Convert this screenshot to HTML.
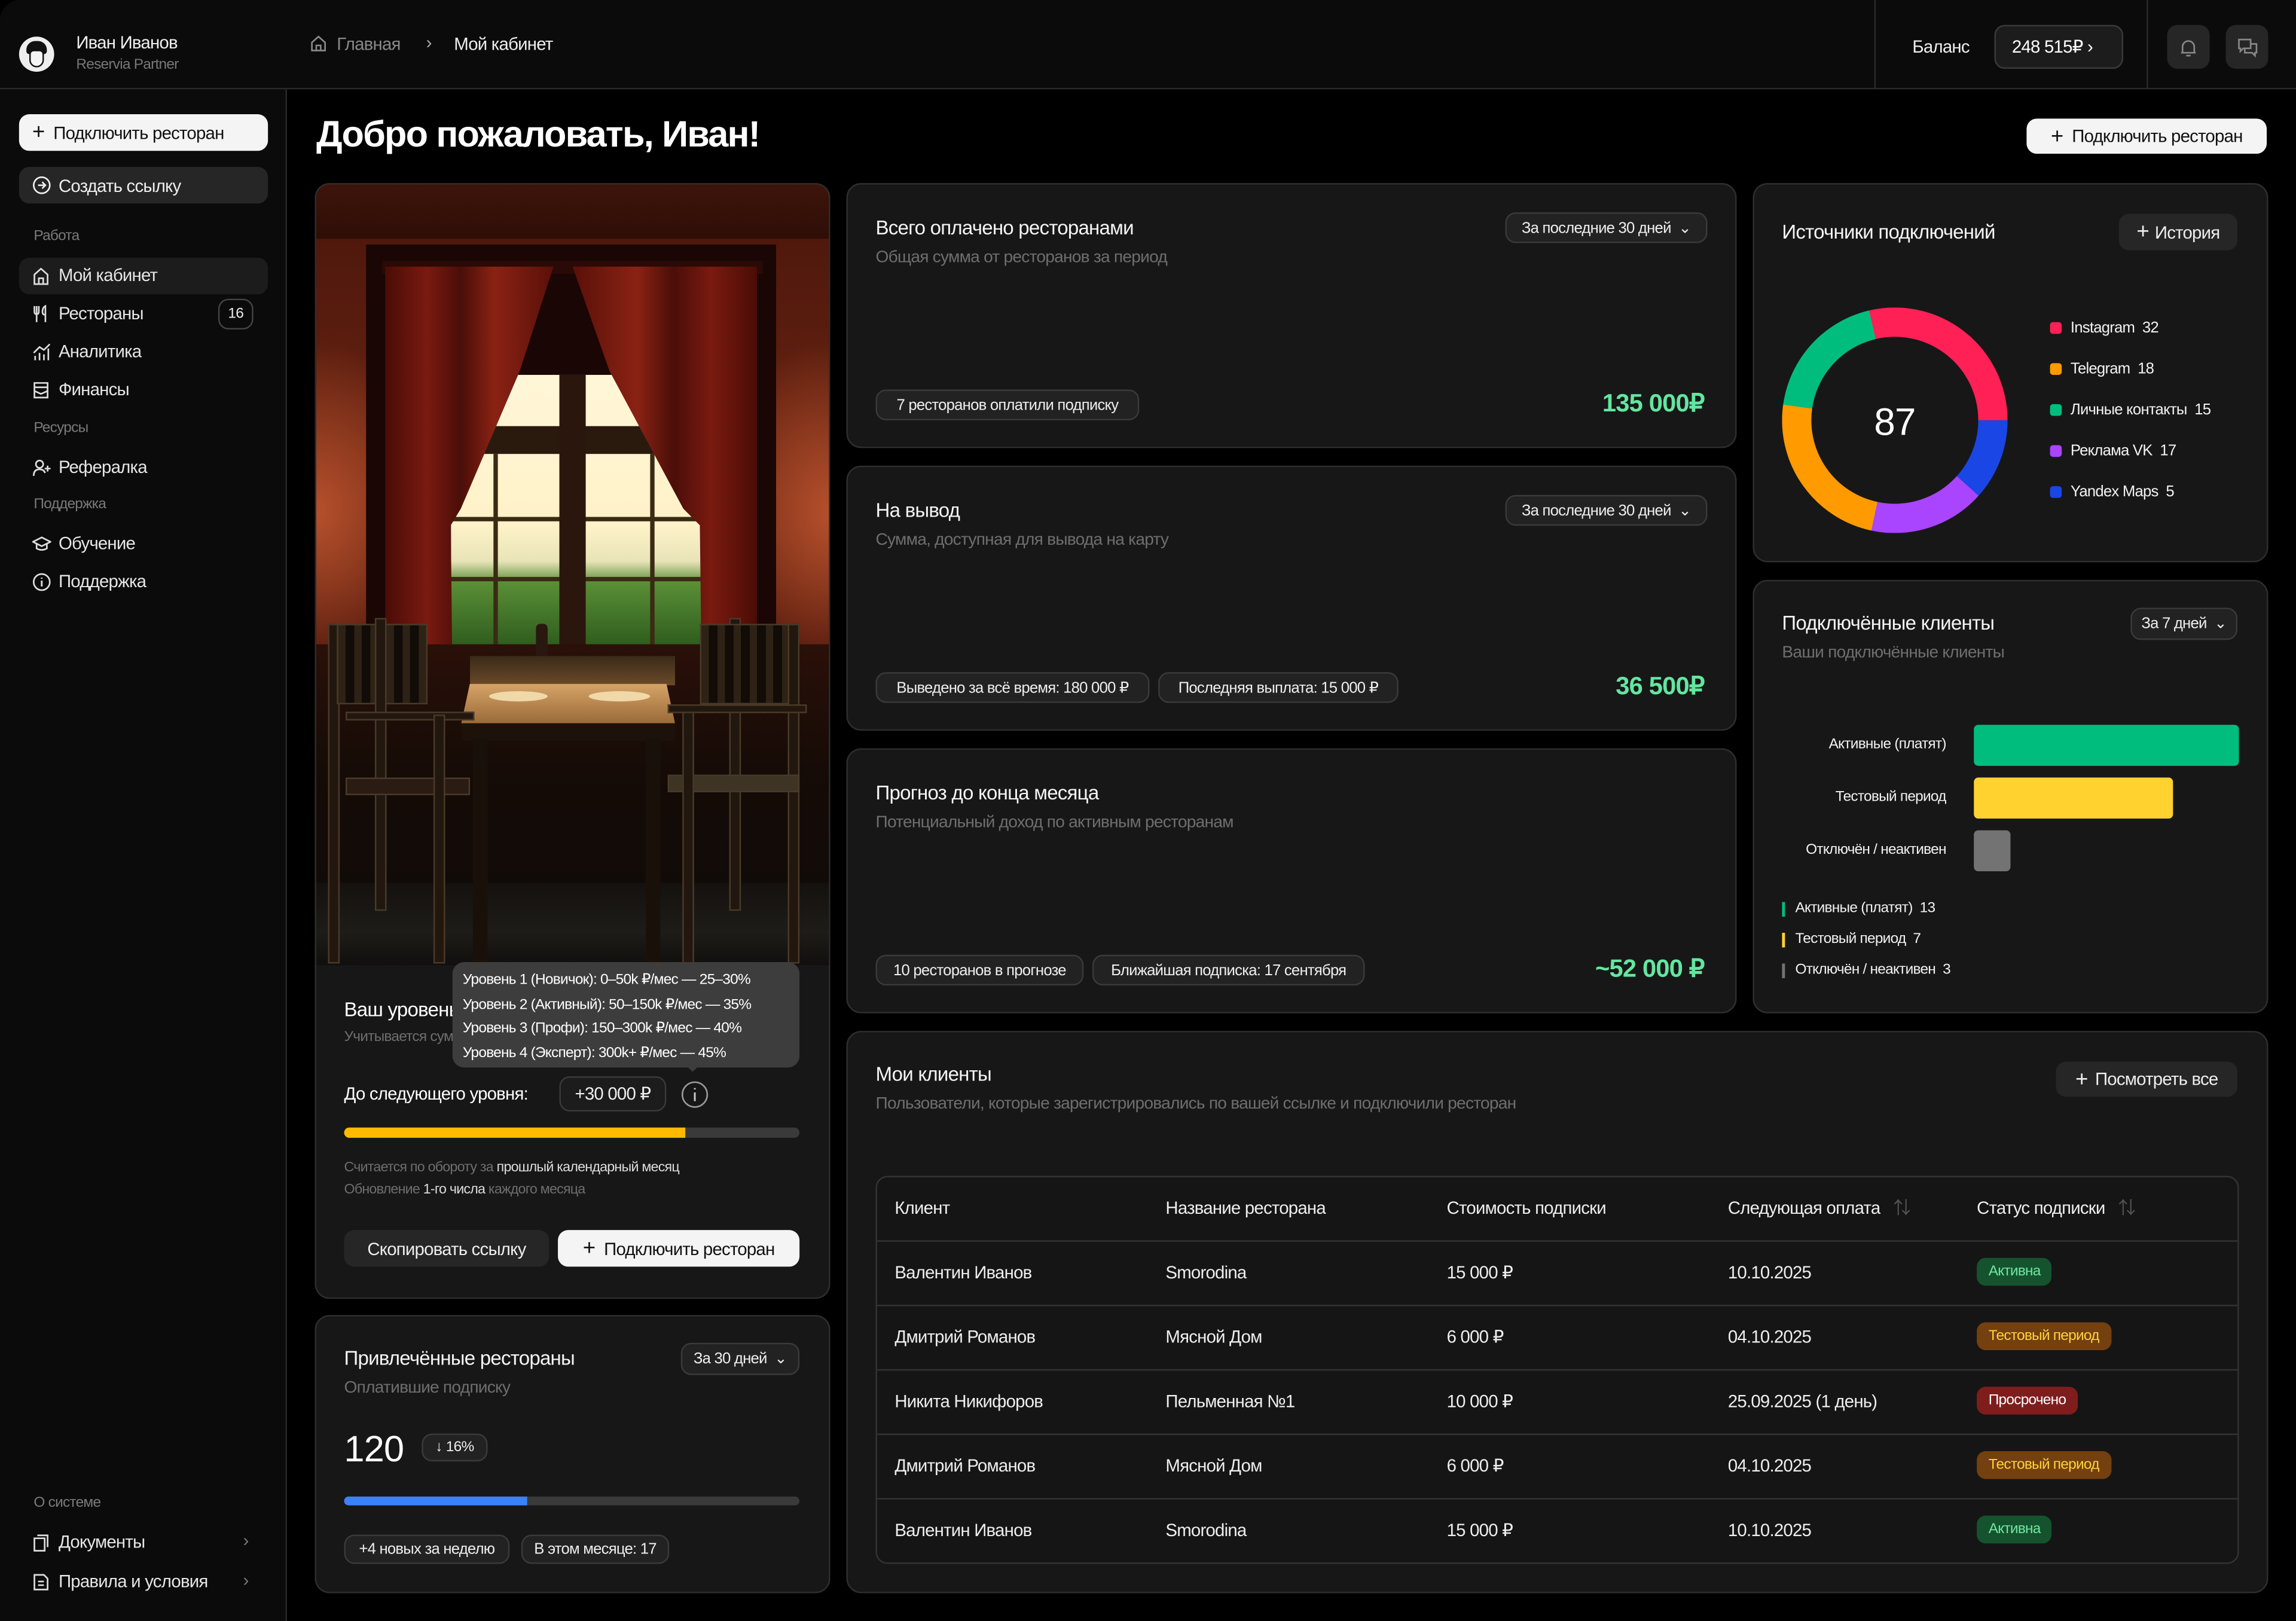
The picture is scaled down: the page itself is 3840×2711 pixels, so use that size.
<!DOCTYPE html>
<html><head><meta charset="utf-8">
<style>
*{box-sizing:border-box;margin:0;padding:0}
html,body{width:3840px;height:2710px;background:#000;overflow:hidden}
#root{position:absolute;left:0;top:0;width:1568px;height:1107px;transform:scale(2.449);transform-origin:0 0;background:#000;font-family:"Liberation Sans","Noto Sans CJK SC",sans-serif;color:#f2f2f2;letter-spacing:-0.02em}
.a{position:absolute}
.t{position:absolute;white-space:nowrap;line-height:1}
.card{position:absolute;background:#171717;border:1px solid #2e2e2e;border-radius:10px}
.pill{position:absolute;background:#222;border:1px solid #3a3a3a;border-radius:7px;font-size:10.5px;color:#eee;display:flex;align-items:center;justify-content:center;white-space:nowrap}
.btnw{position:absolute;background:#f4f4f4;color:#111;border-radius:7px;font-size:12px;display:flex;align-items:center;justify-content:center;white-space:nowrap}
.btnd{position:absolute;background:#262626;color:#eee;border-radius:7px;font-size:12px;display:flex;align-items:center;white-space:nowrap}
.h{font-size:13.5px;color:#f5f5f5}
.s{font-size:11.5px;color:#6e6e6e}
.nav{font-size:12px;color:#e6e6e6}
.sec{font-size:10px;color:#7a7a7a}
.amt{font-size:17px;color:#63e6a0;font-weight:bold}
.th{font-size:12px;color:#eee}
.td{font-size:12px;color:#eee}
.badge{position:absolute;border-radius:6px;font-size:10px;height:19px;display:flex;align-items:center;padding:0 8px;white-space:nowrap}
.bg{background:#15532f;color:#6ee7a0}
.by{background:#74400f;color:#ffd23a}
.br{background:#7f1d1d;color:#fff}
.ch{position:absolute;background:#22170f;border:1px solid #4a3a28}
</style></head><body>
<div id="root">
<!-- header -->
<div class="a" style="left:0;top:0;width:1568px;height:61px;background:#0b0b0b;border-bottom:1px solid #2a2a2a;border-radius:14px 0 0 0"></div>
<div class="a" style="left:13px;top:25px;width:24px;height:24px;border-radius:50%;background:#eee;overflow:hidden">
 <div class="a" style="left:5px;top:3px;width:14px;height:9px;background:#111;border-radius:6px 6px 2px 2px"></div>
 <div class="a" style="left:7px;top:9px;width:10px;height:12px;background:#f4f4f4;border:1px solid #111;border-radius:3px 3px 5px 5px"></div>
</div>
<div class="t" style="left:52px;top:23px;font-size:12px;color:#f0f0f0">Иван Иванов</div>
<div class="t" style="left:52px;top:40px;font-size:10px;color:#777">Reservia Partner</div>
<svg class="a" style="left:211px;top:23px" width="13" height="13" viewBox="0 0 13 13"><path d="M2 6 L6.5 2 L11 6 V11.5 H2 Z M5 11.5 V8 H8 V11.5" fill="none" stroke="#888" stroke-width="1.1"/></svg>
<div class="t" style="left:230px;top:24px;font-size:12px;color:#888">Главная</div>
<div class="t" style="left:291px;top:23px;font-size:12px;color:#aaa">›</div>
<div class="t" style="left:310px;top:24px;font-size:12px;color:#eee">Мой кабинет</div>
<div class="a" style="left:1280px;top:0;width:1px;height:61px;background:#2a2a2a"></div>
<div class="t" style="left:1306px;top:26px;font-size:12px;color:#eee">Баланс</div>
<div class="a" style="left:1362px;top:17px;width:88px;height:30px;border:1px solid #3a3a3a;background:#1c1c1c;border-radius:7px"></div>
<div class="t" style="left:1374px;top:26px;font-size:12px;color:#fff">248 515₽ ›</div>
<div class="a" style="left:1466px;top:0;width:1px;height:61px;background:#2a2a2a"></div>
<div class="a" style="left:1480px;top:17px;width:29px;height:30px;background:#262626;border-radius:7px"></div>
<svg class="a" style="left:1487px;top:25px" width="15" height="15" viewBox="0 0 15 15"><path d="M3.5 11 V7 a4 4 0 0 1 8 0 V11 H2.5 H12.5 M6 13 h3" fill="none" stroke="#888" stroke-width="1.1"/></svg>
<div class="a" style="left:1520px;top:17px;width:29px;height:30px;background:#262626;border-radius:7px"></div>
<svg class="a" style="left:1527px;top:24px" width="16" height="16" viewBox="0 0 16 16"><path d="M2 3 H10 V9 H5 L3 11 V9 H2 Z M10 6 H14 V12 H13 V14 L11 12 H6 V9" fill="none" stroke="#888" stroke-width="1.1"/></svg>

<!-- sidebar -->
<div class="a" style="left:0;top:61px;width:196px;height:1046px;background:#0b0b0b;border-right:1px solid #2a2a2a"></div>
<div class="btnw" style="left:13px;top:78px;width:170px;height:25px;justify-content:flex-start;padding-left:9px"><span style="font-size:15px;margin-right:6px">+</span>Подключить ресторан</div>
<div class="btnd" style="left:13px;top:114px;width:170px;height:25px;padding-left:9px"><svg width="13" height="13" viewBox="0 0 13 13" style="margin-right:5px"><circle cx="6.5" cy="6.5" r="5.5" fill="none" stroke="#eee" stroke-width="1.1"/><path d="M4 6.5 H9 M6.8 4.3 L9 6.5 L6.8 8.7" fill="none" stroke="#eee" stroke-width="1.1"/></svg>Создать ссылку</div>
<div class="t sec" style="left:23px;top:157px">Работа</div>
<div class="a" style="left:13px;top:176px;width:170px;height:25px;background:#1c1c1c;border-radius:7px"></div>
<svg class="a" style="left:22px;top:182px" width="12" height="13" viewBox="0 0 12 13"><path d="M1.5 5.5 L6 1.5 L10.5 5.5 V12 H1.5 Z M4.5 12 V8 H7.5 V12" fill="none" stroke="#ddd" stroke-width="1.1"/></svg>
<div class="t nav" style="left:40px;top:182px">Мой кабинет</div>
<svg class="a" style="left:22px;top:208px" width="12" height="13" viewBox="0 0 12 13"><path d="M1.5 1 V5 Q1.5 6.5 3 6.5 Q4.5 6.5 4.5 5 V1 M3 1 V12 M9 12 V1 Q7 2 7 5 Q7 7 9 7" fill="none" stroke="#ddd" stroke-width="1.1"/></svg>
<div class="t nav" style="left:40px;top:208px">Рестораны</div>
<div class="a" style="left:149px;top:204px;width:24px;height:21px;border:1px solid #444;border-radius:7px;font-size:10px;display:flex;align-items:center;justify-content:center;color:#eee">16</div>
<svg class="a" style="left:22px;top:234px" width="13" height="13" viewBox="0 0 13 13"><path d="M2 12 V9 M5 12 V7 M8 12 V8 M11 12 V4 M1 7 L5 3 L8 5 L12 1" fill="none" stroke="#ddd" stroke-width="1.1"/></svg>
<div class="t nav" style="left:40px;top:234px">Аналитика</div>
<svg class="a" style="left:22px;top:260px" width="12" height="13" viewBox="0 0 12 13"><path d="M1.5 1.5 H10.5 V11.5 H1.5 Z M1.5 4.5 H10.5 M1.5 7 L6 9 L10.5 7" fill="none" stroke="#ddd" stroke-width="1.1"/></svg>
<div class="t nav" style="left:40px;top:260px">Финансы</div>
<div class="t sec" style="left:23px;top:288px">Ресурсы</div>
<svg class="a" style="left:22px;top:313px" width="13" height="13" viewBox="0 0 13 13"><circle cx="5" cy="4" r="2.5" fill="none" stroke="#ddd" stroke-width="1.1"/><path d="M1 12 Q1 7.5 5 7.5 Q8 7.5 8.8 10 M10.5 5 V9 M8.5 7 H12.5" fill="none" stroke="#ddd" stroke-width="1.1"/></svg>
<div class="t nav" style="left:40px;top:313px">Рефералка</div>
<div class="t sec" style="left:23px;top:340px">Поддержка</div>
<svg class="a" style="left:22px;top:365px" width="13" height="13" viewBox="0 0 13 13"><path d="M0.5 5 L6.5 2 L12.5 5 L6.5 8 Z M3 6.5 V9.5 Q6.5 11.5 10 9.5 V6.5" fill="none" stroke="#ddd" stroke-width="1.1"/></svg>
<div class="t nav" style="left:40px;top:365px">Обучение</div>
<svg class="a" style="left:22px;top:391px" width="13" height="13" viewBox="0 0 13 13"><circle cx="6.5" cy="6.5" r="5.5" fill="none" stroke="#ddd" stroke-width="1.1"/><path d="M6.5 5.5 V9.5 M6.5 3.5 V4.2" stroke="#ddd" stroke-width="1.2"/></svg>
<div class="t nav" style="left:40px;top:391px">Поддержка</div>
<div class="t sec" style="left:23px;top:1022px">О системе</div>
<svg class="a" style="left:22px;top:1047px" width="12" height="13" viewBox="0 0 12 13"><path d="M3.5 1.5 H10.5 V9.5 M1.5 3.5 H8.5 V12 H1.5 Z" fill="none" stroke="#ddd" stroke-width="1.1"/></svg>
<div class="t nav" style="left:40px;top:1047px">Документы</div>
<div class="t" style="left:166px;top:1046px;font-size:12px;color:#777">›</div>
<svg class="a" style="left:22px;top:1074px" width="12" height="13" viewBox="0 0 12 13"><path d="M1.5 1.5 H8 L10.5 4 V11.5 H1.5 Z M4 6 H8 M4 8.5 H8" fill="none" stroke="#ddd" stroke-width="1.1"/></svg>
<div class="t nav" style="left:40px;top:1074px">Правила и условия</div>
<div class="t" style="left:166px;top:1073px;font-size:12px;color:#777">›</div>

<!-- title -->
<div class="t" style="left:216px;top:80px;font-size:25px;font-weight:bold;color:#fff;letter-spacing:-0.03em">Добро пожаловать, Иван!</div>
<div class="btnw" style="left:1384px;top:81px;width:164px;height:24px"><span style="font-size:15px;margin-right:6px">+</span>Подключить ресторан</div>

<!-- column 1 card -->
<div class="card" style="left:215px;top:125px;width:352px;height:762px;overflow:hidden">
 <div class="a" style="left:0;top:0;width:352px;height:533px;overflow:hidden;background:radial-gradient(ellipse 25% 22% at 0% 42%,#b5502c 0%,rgba(120,40,20,0) 100%),radial-gradient(ellipse 25% 22% at 100% 42%,#b5502c 0%,rgba(120,40,20,0) 100%),linear-gradient(#4a160b,#6a2412 40%,#4a1409 60%,#1a0a06)">
  <div class="a" style="left:0;top:0;width:352px;height:37px;background:linear-gradient(#3e140a,#2e0e07)"></div>
  <div class="a" style="left:34px;top:41px;width:280px;height:273px;background:#1a0604"></div>
  <!-- window -->
  <div class="a" style="left:92px;top:130px;width:177px;height:187px;background:linear-gradient(#fff6d8,#fff2c8 55%,#e8e4b8 68%,#5a8e36 76%,#2c5a1c)"></div>
  <div class="a" style="left:92px;top:165px;width:177px;height:19px;background:#2a1a0e"></div>
  <div class="a" style="left:92px;top:227px;width:177px;height:3px;background:#3a2a14"></div>
  <div class="a" style="left:92px;top:268px;width:177px;height:3px;background:#3a2a14"></div>
  <div class="a" style="left:121px;top:184px;width:3px;height:133px;background:#3a2a14"></div>
  <div class="a" style="left:166px;top:130px;width:18px;height:187px;background:#2a160c"></div>
  <div class="a" style="left:228px;top:184px;width:3px;height:133px;background:#3a2a14"></div>
  <div class="a" style="left:92px;top:314px;width:177px;height:8px;background:#1e0c06"></div>
  <!-- rod -->
  <div class="a" style="left:45px;top:52px;width:260px;height:9px;background:#2a0a06"></div>
  <!-- curtains -->
  <div class="a" style="left:47px;top:56px;width:115px;height:285px;background:linear-gradient(90deg,#4a0c06,#7a1a10 25%,#4a0e08 45%,#8a2214 65%,#5a1009);clip-path:polygon(0 0,100% 0,80% 25%,45% 58%,39% 62%,40% 100%,0 100%)"></div>
  <div class="a" style="left:175px;top:56px;width:126px;height:285px;background:linear-gradient(90deg,#5a1009,#8a2214 35%,#4a0e08 55%,#7a1a10 75%,#4a0c06);clip-path:polygon(0 0,100% 0,100% 100%,70% 100%,69% 62%,60% 58%,20% 25%)"></div>
  <!-- wainscot -->
  <div class="a" style="left:0;top:314px;width:352px;height:219px;background:linear-gradient(#2a1008,#150b07 40%,#0e0b09)"></div>
  <!-- floor -->
  <div class="a" style="left:0;top:477px;width:352px;height:56px;background:linear-gradient(#14110e,#1e1c18 60%,#100f0d)"></div>
  <!-- table items -->
  <div class="a" style="left:150px;top:300px;width:8px;height:28px;background:#2a1810;border-radius:3px 3px 0 0"></div>
  <!-- table -->
  <div class="a" style="left:105px;top:322px;width:140px;height:20px;background:linear-gradient(#3a2a1a,#6a4a28)"></div>
  <div class="a" style="left:99px;top:341px;width:146px;height:27px;background:linear-gradient(#d6a468,#9a6a38);clip-path:polygon(4% 0,96% 0,100% 100%,0 100%)"></div>
  <div class="a" style="left:118px;top:346px;width:40px;height:7px;border-radius:50%;background:#f0d8a8"></div>
  <div class="a" style="left:186px;top:346px;width:42px;height:7px;border-radius:50%;background:#f0d8a8"></div>
  <div class="a" style="left:99px;top:368px;width:146px;height:12px;background:#1c120a"></div>
  <div class="a" style="left:107px;top:378px;width:10px;height:155px;background:#1a100a"></div>
  <div class="a" style="left:225px;top:378px;width:10px;height:155px;background:#1a100a"></div>
  <!-- chairs left -->
  <div class="ch" style="left:8px;top:300px;width:8px;height:232px"></div>
  <div class="ch" style="left:14px;top:300px;width:62px;height:55px;background:repeating-linear-gradient(90deg,#2e2216 0 5px,#120c08 5px 11px)"></div>
  <div class="ch" style="left:40px;top:296px;width:8px;height:200px"></div>
  <div class="ch" style="left:20px;top:360px;width:88px;height:6px"></div>
  <div class="ch" style="left:20px;top:405px;width:85px;height:12px;background:#2a1c12"></div>
  <div class="ch" style="left:80px;top:362px;width:8px;height:170px"></div>
  <!-- chairs right -->
  <div class="ch" style="left:282px;top:296px;width:8px;height:200px"></div>
  <div class="ch" style="left:262px;top:300px;width:62px;height:55px;background:repeating-linear-gradient(90deg,#2e2216 0 5px,#120c08 5px 11px)"></div>
  <div class="ch" style="left:322px;top:300px;width:8px;height:232px"></div>
  <div class="ch" style="left:240px;top:355px;width:95px;height:6px"></div>
  <div class="ch" style="left:240px;top:403px;width:90px;height:12px;background:#3e3424"></div>
  <div class="ch" style="left:250px;top:360px;width:8px;height:172px"></div>
 </div>
</div>
<div class="t" style="left:235px;top:683px;font-size:13.5px;color:#fff">Ваш уровень</div>
<div class="t s" style="left:235px;top:704px;font-size:10px">Учитывается сумма</div>
<div class="a" style="left:309px;top:657px;width:237px;height:72px;background:#3d3d3d;border-radius:8px"></div>
<div class="a" style="left:468px;top:727px;width:0;height:0;border-left:5px solid transparent;border-right:5px solid transparent;border-top:5px solid #3d3d3d"></div>
<div class="t" style="left:316px;top:662px;font-size:10px;color:#fff;line-height:16.5px">Уровень 1 (Новичок): 0–50k ₽/мес — 25–30%<br>Уровень 2 (Активный): 50–150k ₽/мес — 35%<br>Уровень 3 (Профи): 150–300k ₽/мес — 40%<br>Уровень 4 (Эксперт): 300k+ ₽/мес — 45%</div>
<div class="t" style="left:235px;top:741px;font-size:12px;color:#fff">До следующего уровня:</div>
<div class="pill" style="left:382px;top:735px;width:73px;height:24px;font-size:12px;background:#1c1c1c">+30 000 ₽</div>
<svg class="a" style="left:465px;top:738px" width="19" height="19" viewBox="0 0 19 19"><circle cx="9.5" cy="9.5" r="8.5" fill="none" stroke="#999" stroke-width="1.1"/><path d="M9.5 8 V14 M9.5 5 V6" stroke="#ccc" stroke-width="1.2"/></svg>
<div class="a" style="left:235px;top:770px;width:311px;height:7px;background:#3a3a3a;border-radius:4px"></div>
<div class="a" style="left:235px;top:770px;width:233px;height:7px;background:#ffba00;border-radius:4px 0 0 4px"></div>
<div class="t" style="left:235px;top:793px;font-size:9.5px;color:#6e6e6e">Считается по обороту за <span style="color:#ddd">прошлый календарный месяц</span></div>
<div class="t" style="left:235px;top:808px;font-size:9.5px;color:#6e6e6e">Обновление <span style="color:#ddd">1-го числа</span> каждого месяца</div>
<div class="btnd" style="left:235px;top:840px;width:140px;height:25px;justify-content:center">Скопировать ссылку</div>
<div class="btnw" style="left:381px;top:840px;width:165px;height:25px"><span style="font-size:15px;margin-right:6px">+</span>Подключить ресторан</div>

<!-- card 2 col1 -->
<div class="card" style="left:215px;top:898px;width:352px;height:190px"></div>
<div class="t h" style="left:235px;top:921px">Привлечённые рестораны</div>
<div class="pill" style="left:465px;top:917px;width:81px;height:22px">За 30 дней &nbsp;⌄</div>
<div class="t s" style="left:235px;top:943px">Оплатившие подписку</div>
<div class="t" style="left:235px;top:978px;font-size:25px;color:#fff">120</div>
<div class="pill" style="left:288px;top:979px;width:45px;height:19px;font-size:10px">↓ 16%</div>
<div class="a" style="left:235px;top:1022px;width:311px;height:6px;background:#3a3a3a;border-radius:3px"></div>
<div class="a" style="left:235px;top:1022px;width:125px;height:6px;background:#3b82f6;border-radius:3px 0 0 3px"></div>
<div class="pill" style="left:235px;top:1048px;width:113px;height:20px">+4 новых за неделю</div>
<div class="pill" style="left:356px;top:1048px;width:101px;height:20px">В этом месяце: 17</div>

<!-- column 2 -->
<div class="card" style="left:578px;top:125px;width:608px;height:181px"></div>
<div class="t h" style="left:598px;top:149px">Всего оплачено ресторанами</div>
<div class="t s" style="left:598px;top:171px">Общая сумма от ресторанов за период</div>
<div class="pill" style="left:1028px;top:145px;width:138px;height:21px">За последние 30 дней &nbsp;⌄</div>
<div class="pill" style="left:598px;top:266px;width:180px;height:21px">7 ресторанов оплатили подписку</div>
<div class="t amt" style="right:404px;top:267px">135 000₽</div>

<div class="card" style="left:578px;top:318px;width:608px;height:181px"></div>
<div class="t h" style="left:598px;top:342px">На вывод</div>
<div class="t s" style="left:598px;top:364px">Сумма, доступная для вывода на карту</div>
<div class="pill" style="left:1028px;top:338px;width:138px;height:21px">За последние 30 дней &nbsp;⌄</div>
<div class="pill" style="left:598px;top:459px;width:187px;height:21px">Выведено за всё время: 180 000 ₽</div>
<div class="pill" style="left:791px;top:459px;width:164px;height:21px">Последняя выплата: 15 000 ₽</div>
<div class="t amt" style="right:404px;top:460px">36 500₽</div>

<div class="card" style="left:578px;top:511px;width:608px;height:181px"></div>
<div class="t h" style="left:598px;top:535px">Прогноз до конца месяца</div>
<div class="t s" style="left:598px;top:557px">Потенциальный доход по активным ресторанам</div>
<div class="pill" style="left:598px;top:652px;width:142px;height:21px">10 ресторанов в прогнозе</div>
<div class="pill" style="left:746px;top:652px;width:186px;height:21px">Ближайшая подписка: 17 сентября</div>
<div class="t amt" style="right:404px;top:653px">~52 000 ₽</div>

<!-- clients table -->
<div class="card" style="left:578px;top:704px;width:971px;height:384px"></div>
<div class="t h" style="left:598px;top:727px">Мои клиенты</div>
<div class="t s" style="left:598px;top:749px">Пользователи, которые зарегистрировались по вашей ссылке и подключили ресторан</div>
<div class="btnd" style="left:1404px;top:725px;width:124px;height:24px;justify-content:center"><span style="font-size:15px;margin-right:5px">+</span>Посмотреть все</div>
<div class="a" style="left:598px;top:803px;width:931px;height:265px;border:1px solid #333;border-radius:8px;background:#151515"></div>
<div class="a" style="left:599px;top:847px;width:929px;height:1px;background:#333"></div>
<div class="a" style="left:599px;top:891px;width:929px;height:1px;background:#333"></div>
<div class="a" style="left:599px;top:935px;width:929px;height:1px;background:#333"></div>
<div class="a" style="left:599px;top:979px;width:929px;height:1px;background:#333"></div>
<div class="a" style="left:599px;top:1023px;width:929px;height:1px;background:#333"></div>
<div class="t th" style="left:611px;top:819px">Клиент</div>
<div class="t th" style="left:796px;top:819px">Название ресторана</div>
<div class="t th" style="left:988px;top:819px">Стоимость подписки</div>
<div class="t th" style="left:1180px;top:819px">Следующая оплата <span style="color:#555;margin-left:6px">⇅</span></div>
<div class="t th" style="left:1350px;top:819px">Статус подписки <span style="color:#555;margin-left:6px">⇅</span></div>

<div class="t td" style="left:611px;top:863px">Валентин Иванов</div><div class="t td" style="left:796px;top:863px">Smorodina</div><div class="t td" style="left:988px;top:863px">15 000 ₽</div><div class="t td" style="left:1180px;top:863px">10.10.2025</div><div class="badge bg" style="left:1350px;top:859px">Активна</div>
<div class="t td" style="left:611px;top:907px">Дмитрий Романов</div><div class="t td" style="left:796px;top:907px">Мясной Дом</div><div class="t td" style="left:988px;top:907px">6 000 ₽</div><div class="t td" style="left:1180px;top:907px">04.10.2025</div><div class="badge by" style="left:1350px;top:903px">Тестовый период</div>
<div class="t td" style="left:611px;top:951px">Никита Никифоров</div><div class="t td" style="left:796px;top:951px">Пельменная №1</div><div class="t td" style="left:988px;top:951px">10 000 ₽</div><div class="t td" style="left:1180px;top:951px">25.09.2025 (1 день)</div><div class="badge br" style="left:1350px;top:947px">Просрочено</div>
<div class="t td" style="left:611px;top:995px">Дмитрий Романов</div><div class="t td" style="left:796px;top:995px">Мясной Дом</div><div class="t td" style="left:988px;top:995px">6 000 ₽</div><div class="t td" style="left:1180px;top:995px">04.10.2025</div><div class="badge by" style="left:1350px;top:991px">Тестовый период</div>
<div class="t td" style="left:611px;top:1039px">Валентин Иванов</div><div class="t td" style="left:796px;top:1039px">Smorodina</div><div class="t td" style="left:988px;top:1039px">15 000 ₽</div><div class="t td" style="left:1180px;top:1039px">10.10.2025</div><div class="badge bg" style="left:1350px;top:1035px">Активна</div>

<!-- column 3 -->
<div class="card" style="left:1197px;top:125px;width:352px;height:259px"></div>
<div class="t h" style="left:1217px;top:152px">Источники подключений</div>
<div class="btnd" style="left:1447px;top:146px;width:81px;height:25px;justify-content:center"><span style="font-size:15px;margin-right:4px">+</span>История</div>
<svg class="a" style="left:1217px;top:210px" width="154" height="154" viewBox="0 0 154 154">
 <g fill="none" stroke-width="20">
  <circle cx="77" cy="77" r="67" stroke="#ff2056" stroke-dasharray="121.6 421" transform="rotate(-104 77 77)"/>
  <circle cx="77" cy="77" r="67" stroke="#1a46e6" stroke-dasharray="49.1 421" transform="rotate(0 77 77)"/>
  <circle cx="77" cy="77" r="67" stroke="#a944ff" stroke-dasharray="70.2 421" transform="rotate(42 77 77)"/>
  <circle cx="77" cy="77" r="67" stroke="#ff9a00" stroke-dasharray="100.6 421" transform="rotate(102 77 77)"/>
  <circle cx="77" cy="77" r="67" stroke="#00bd7e" stroke-dasharray="80.4 421" transform="rotate(188 77 77)"/>
 </g>
 <text x="77" y="87" text-anchor="middle" font-family="Liberation Sans" font-size="26" fill="#fff">87</text>
</svg>
<div class="a" style="left:1400px;top:220px;width:8px;height:8px;border-radius:2px;background:#ff2056"></div><div class="t" style="left:1414px;top:219px;font-size:10.5px">Instagram &nbsp;32</div>
<div class="a" style="left:1400px;top:248px;width:8px;height:8px;border-radius:2px;background:#ff9a00"></div><div class="t" style="left:1414px;top:247px;font-size:10.5px">Telegram &nbsp;18</div>
<div class="a" style="left:1400px;top:276px;width:8px;height:8px;border-radius:2px;background:#00bd7e"></div><div class="t" style="left:1414px;top:275px;font-size:10.5px">Личные контакты &nbsp;15</div>
<div class="a" style="left:1400px;top:304px;width:8px;height:8px;border-radius:2px;background:#a944ff"></div><div class="t" style="left:1414px;top:303px;font-size:10.5px">Реклама VK &nbsp;17</div>
<div class="a" style="left:1400px;top:332px;width:8px;height:8px;border-radius:2px;background:#1a46e6"></div><div class="t" style="left:1414px;top:331px;font-size:10.5px">Yandex Maps &nbsp;5</div>

<div class="card" style="left:1197px;top:396px;width:352px;height:296px"></div>
<div class="t h" style="left:1217px;top:419px">Подключённые клиенты</div>
<div class="pill" style="left:1455px;top:415px;width:73px;height:22px">За 7 дней &nbsp;⌄</div>
<div class="t s" style="left:1217px;top:441px">Ваши подключённые клиенты</div>
<div class="t" style="right:239px;top:504px;font-size:10px">Активные (платят)</div>
<div class="a" style="left:1348px;top:495px;width:181px;height:28px;background:#00bd7e;border-radius:3px"></div>
<div class="t" style="right:239px;top:540px;font-size:10px">Тестовый период</div>
<div class="a" style="left:1348px;top:531px;width:136px;height:28px;background:#ffd230;border-radius:3px"></div>
<div class="t" style="right:239px;top:576px;font-size:10px">Отключён / неактивен</div>
<div class="a" style="left:1348px;top:567px;width:25px;height:28px;background:#737373;border-radius:3px"></div>
<div class="a" style="left:1217px;top:616px;width:3px;height:10px;border-left:2px dashed #00bd7e"></div><div class="t" style="left:1226px;top:616px;font-size:10px">Активные (платят) &nbsp;13</div>
<div class="a" style="left:1217px;top:637px;width:3px;height:10px;border-left:2px dashed #ffd230"></div><div class="t" style="left:1226px;top:637px;font-size:10px">Тестовый период &nbsp;7</div>
<div class="a" style="left:1217px;top:658px;width:3px;height:10px;border-left:2px dashed #737373"></div><div class="t" style="left:1226px;top:658px;font-size:10px">Отключён / неактивен &nbsp;3</div>
</div>
</body></html>
